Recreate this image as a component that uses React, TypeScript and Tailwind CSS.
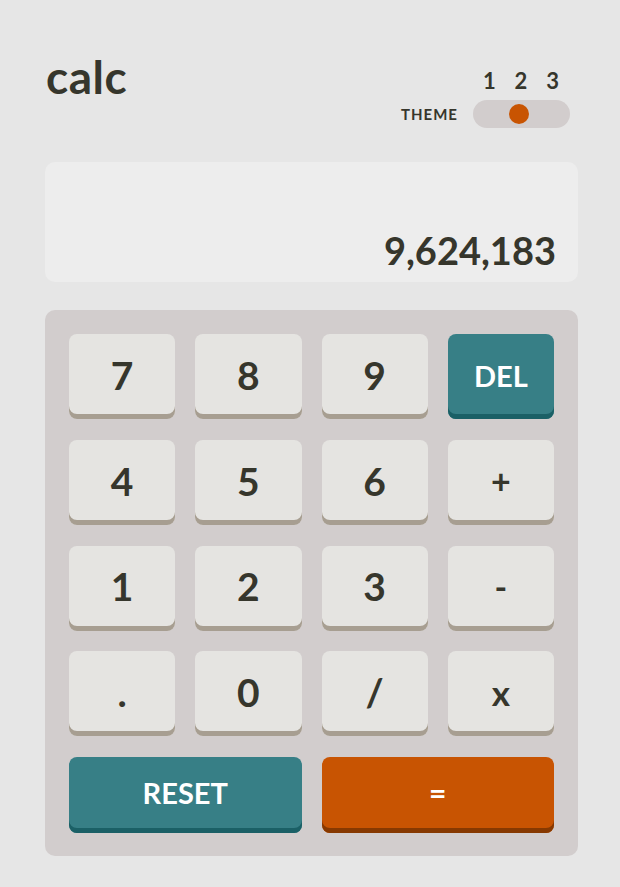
import React from "react";

type Key = { label: string; kind?: "del" | "reset" | "equals"; wide?: boolean; size?: string };

const keys: Key[] = [
  { label: "7" }, { label: "8" }, { label: "9" }, { label: "DEL", kind: "del" },
  { label: "4" }, { label: "5" }, { label: "6" }, { label: "+", size: "text-[34px]" },
  { label: "1" }, { label: "2" }, { label: "3" }, { label: "-", size: "text-[34px]" },
  { label: "." }, { label: "0" }, { label: "/" }, { label: "x", size: "text-[35px]" },
  { label: "RESET", kind: "reset", wide: true }, { label: "=", kind: "equals", wide: true },
];

function CalcKey({ k }: { k: Key }) {
  if (k.kind === "del" || k.kind === "reset") {
    return (
      <button
        className={`${k.wide ? "col-span-2 h-[76px] pb-[4px]" : "h-[85px] pb-[1px]"} flex items-center justify-center rounded-[8px] bg-[#377f86] text-white text-[29px] font-bold shadow-[inset_0_-5px_0_#1b6066]`}
      >
        {k.label}
      </button>
    );
  }
  if (k.kind === "equals") {
    return (
      <button className="col-span-2 h-[76px] pb-[6px] flex items-center justify-center rounded-[8px] bg-[#c85402] text-white text-[30px] font-bold shadow-[inset_0_-5px_0_#873901]">
        {k.label}
      </button>
    );
  }
  return (
    <button
      className={`h-[85px] pb-[3px] flex items-center justify-center rounded-[8px] bg-[#e5e4e1] text-[#36362c] ${k.size ?? "text-[39px]"} font-bold shadow-[inset_0_-5px_0_#a79e91]`}
    >
      {k.label}
    </button>
  );
}

export default function App() {
  return (
    <div
      className="min-h-[887px] w-full bg-[#e6e6e6] text-[#36362c]"
      style={{ fontFamily: "Lato, 'Noto Sans', sans-serif" }}
    >
      <div className="ml-[45px] w-[533px] pt-[53px]">
        {/* Header */}
        <div className="flex items-start justify-between">
          <h1 className="text-[46px] font-bold leading-none pl-[1px] pt-[1px] tracking-[0.5px]">calc</h1>
          <div className="flex items-end gap-[15px] pr-[8px] pt-[17px]">
            <span className="text-[15px] font-bold tracking-[1px] mb-[3px]">THEME</span>
            <div className="flex flex-col gap-[8px]">
              <div className="flex justify-between pl-[10px] pr-[11px] text-[22px] font-bold leading-none">
                <span>1</span>
                <span>2</span>
                <span>3</span>
              </div>
              <div className="flex items-center h-[28px] w-[97px] rounded-full bg-[#d2cdcd] px-[5px]">
                <div className="ml-[31px] h-[20px] w-[20px] rounded-full bg-[#c85402]" />
              </div>
            </div>
          </div>
        </div>

        {/* Screen */}
        <div className="mt-[34px] flex h-[120px] items-end justify-end rounded-[10px] bg-[#ededed] px-[22px] pb-[13px]">
          <span className="text-[38px] font-bold leading-none">9,624,183</span>
        </div>

        {/* Keypad */}
        <div className="mt-[28px] rounded-[10px] bg-[#d2cdcd] p-[24px] pb-[23px]">
          <div className="grid grid-cols-4 gap-x-[20px] gap-y-[20.75px]">
            {keys.map((k) => (
              <CalcKey key={k.label} k={k} />
            ))}
          </div>
        </div>
      </div>
    </div>
  );
}
